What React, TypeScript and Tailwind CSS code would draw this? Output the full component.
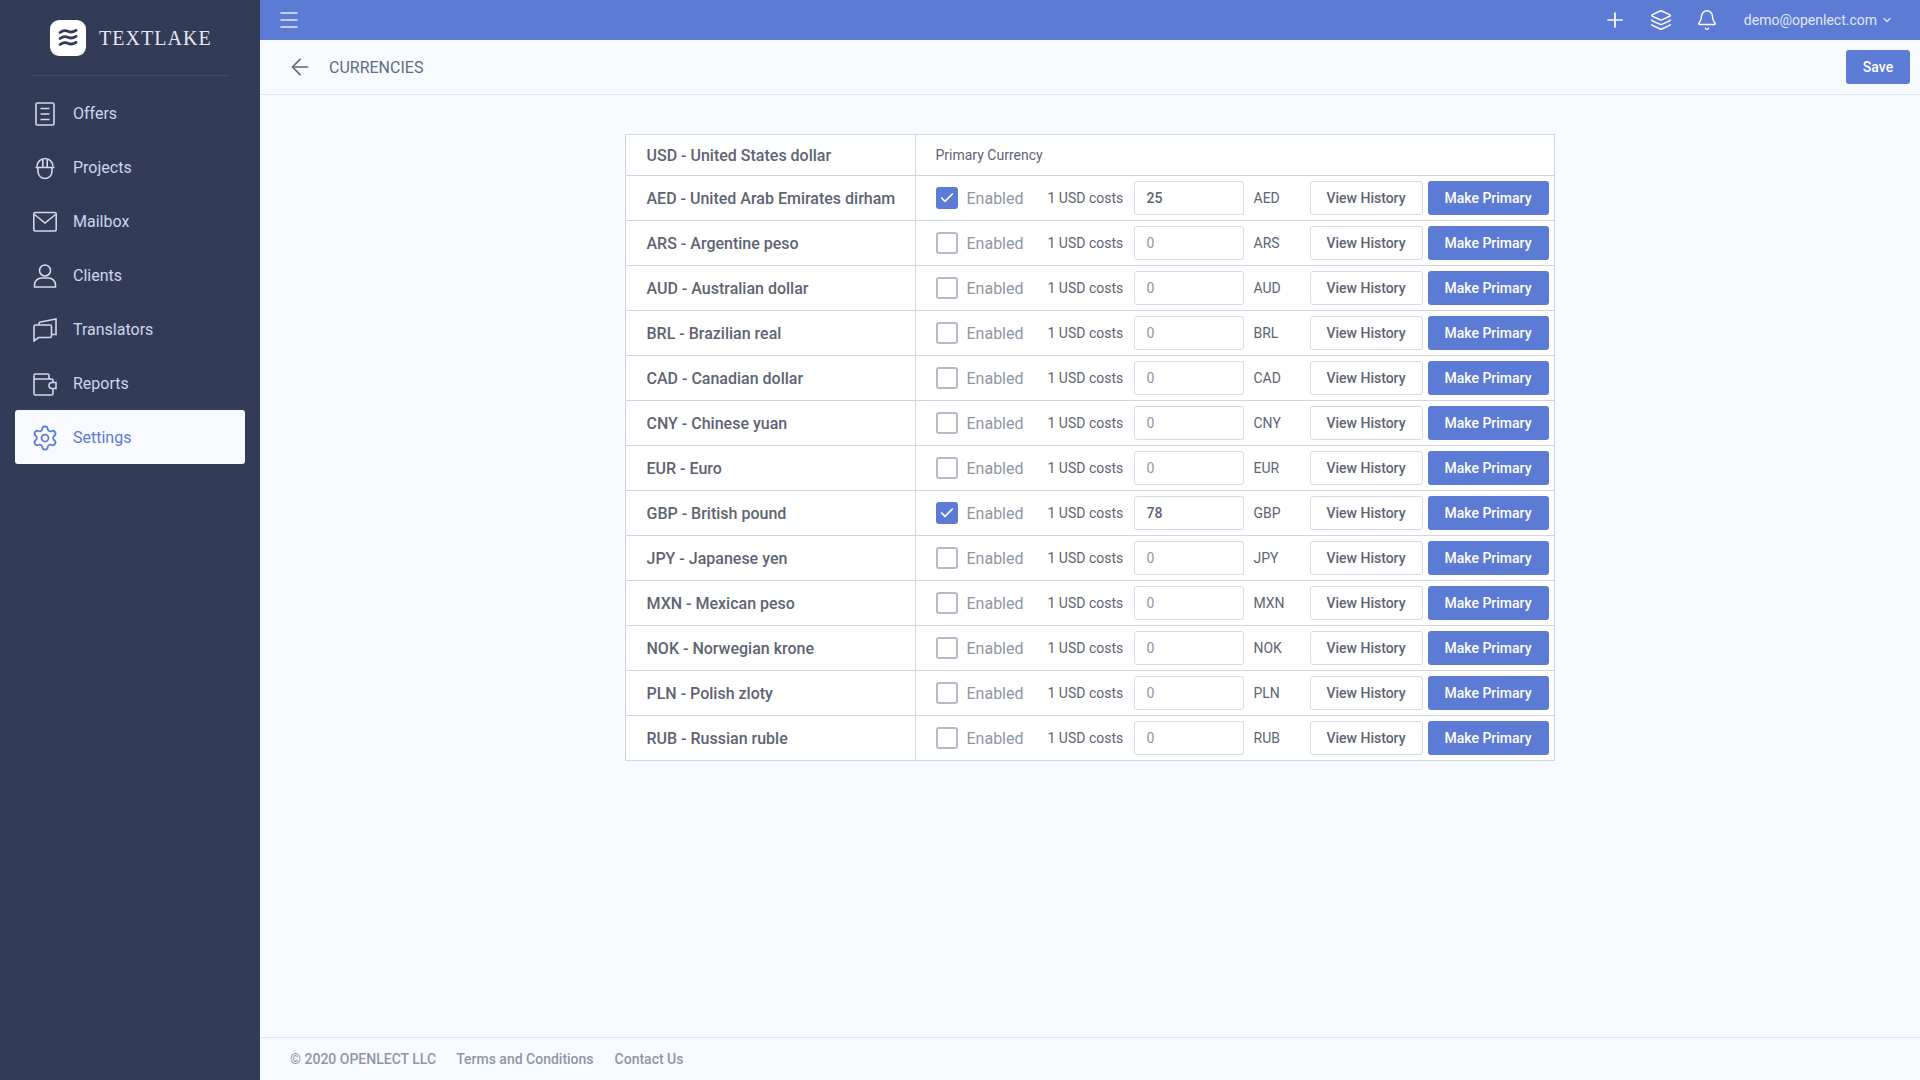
import { Menu, Plus, Layers, Bell, ChevronDown, ArrowLeft, Settings, Check } from 'lucide-react';

const nav = [
  { label: 'Offers', icon: <OffersIcon /> },
  { label: 'Projects', icon: <HelmetIcon /> },
  { label: 'Mailbox', icon: <MailIcon /> },
  { label: 'Clients', icon: <ClientIcon /> },
  { label: 'Translators', icon: <ChatIcon /> },
  { label: 'Reports', icon: <WalletIcon /> },
];

const currencies = [
  { code: 'AED', name: 'United Arab Emirates dirham', value: '25', on: true },
  { code: 'ARS', name: 'Argentine peso', value: '0', on: false },
  { code: 'AUD', name: 'Australian dollar', value: '0', on: false },
  { code: 'BRL', name: 'Brazilian real', value: '0', on: false },
  { code: 'CAD', name: 'Canadian dollar', value: '0', on: false },
  { code: 'CNY', name: 'Chinese yuan', value: '0', on: false },
  { code: 'EUR', name: 'Euro', value: '0', on: false },
  { code: 'GBP', name: 'British pound', value: '78', on: true },
  { code: 'JPY', name: 'Japanese yen', value: '0', on: false },
  { code: 'MXN', name: 'Mexican peso', value: '0', on: false },
  { code: 'NOK', name: 'Norwegian krone', value: '0', on: false },
  { code: 'PLN', name: 'Polish zloty', value: '0', on: false },
  { code: 'RUB', name: 'Russian ruble', value: '0', on: false },
];

function OffersIcon() {
  return (
    <svg width="24" height="24" viewBox="0 0 24 24" fill="none" stroke="currentColor" strokeWidth="1.6">
      <rect x="3" y="1" width="18" height="22" rx="1.5" />
      <path d="M7.500 6.500h9M7.500 12h9M7.500 17.500h9" />
    </svg>
  );
}

function HelmetIcon() {
  return (
    <svg width="24" height="24" viewBox="0 0 24 24" fill="none" stroke="currentColor" strokeWidth="1.6">
      <path d="M4 10.500a8 8 0 0 1 16 0M2.500 11.500h19M9.800 2.500v9M14.200 2.500v9" />
      <path d="M5 12v3.500a7 7 0 0 0 14 0V12" />
    </svg>
  );
}

function MailIcon() {
  return (
    <svg width="24" height="24" viewBox="0 0 24 24" fill="none" stroke="currentColor" strokeWidth="1.6">
      <rect x="0.800" y="2.500" width="22.400" height="18.500" rx="1.500" />
      <path d="M1.500 4.500l10.500 8.500 10.500-8.500" />
    </svg>
  );
}

function ClientIcon() {
  return (
    <svg width="24" height="24" viewBox="0 0 24 24" fill="none" stroke="currentColor" strokeWidth="1.6">
      <circle cx="12" cy="6.500" r="5.500" />
      <path d="M1.500 23v-2.500a7 7 0 0 1 7-6.500h7a7 7 0 0 1 7 6.500V23z" />
    </svg>
  );
}

function ChatIcon() {
  return (
    <svg width="24" height="24" viewBox="0 0 24 24" fill="none" stroke="currentColor" strokeWidth="1.6">
      <path d="M1 8.500a1.500 1.500 0 0 1 1.500-1.500H17a1.500 1.500 0 0 1 1.500 1.500V18a1.500 1.500 0 0 1-1.500 1.500H5.500L1 23z" />
      <path d="M6 7V5.500A1.500 1.500 0 0 1 7.500 4L23 1v15.500H18.500" />
    </svg>
  );
}

function WalletIcon() {
  return (
    <svg width="24" height="24" viewBox="0 0 24 24" fill="none" stroke="currentColor" strokeWidth="1.6">
      <path d="M20 10V8.500A1.500 1.500 0 0 0 18.500 7H1.500M1 3.500v18A1.500 1.500 0 0 0 2.500 23h16a1.500 1.500 0 0 0 1.500-1.500V17" />
      <path d="M1 3.500A1.500 1.500 0 0 1 2.500 2h12A1.500 1.500 0 0 1 16 3.500V7" />
      <path d="M23 10.500h-4a3 3 0 0 0 0 6h4z" />
    </svg>
  );
}

function LogoMark() {
  return (
    <svg width="22" height="20" viewBox="0 0 22 20" fill="none" stroke="#323c56" strokeWidth="2.800" strokeLinecap="round">
      <path d="M3 4.500c3-2.400 5.500-2.400 8-1.200s5 1 8-1" />
      <path d="M3 10.500c3-2.400 5.500-2.400 8-1.200s5 1 8-1" />
      <path d="M3 16.500c3-2.400 5.500-2.400 8-1.200s5 1 8-1" />
    </svg>
  );
}

export default function App() {
  return (
    <div className="flex h-[1080px] w-[1920px] overflow-hidden bg-[#f7fbff] font-['Roboto',sans-serif]">
      {/* Sidebar */}
      <aside className="flex w-[260px] shrink-0 flex-col bg-[#323c56]">
        <div className="mx-8 flex h-[76px] items-center gap-[13px] border-b border-[#434d68] pl-[18px]">
          <div className="flex h-9 w-9 items-center justify-center rounded-[9px] bg-white">
            <LogoMark />
          </div>
          <span className="font-['Liberation_Serif',serif] text-[20px] tracking-[1.05px] text-[#e6e9f0]">TEXTLAKE</span>
        </div>
        <nav className="mt-[11px] flex flex-col px-[15px]">
          {nav.map(item => (
            <div key={item.label} className="flex h-[54px] items-center gap-4 pl-[18px] text-[16px] text-[#cdd6ec]">
              <span className="text-[#d3d9e8]">{item.icon}</span>
              {item.label}
            </div>
          ))}
          <div className="-mt-px flex h-[54px] items-center gap-4 rounded-[3px] bg-[#f8faff] pl-[18px] pt-[2px] text-[16px] text-[#5c7bd5]">
            <Settings size={28} strokeWidth={1.5} className="-mx-[2px]" />
            Settings
          </div>
        </nav>
      </aside>

      <div className="flex min-w-0 flex-1 flex-col">
        {/* Top bar */}
        <header className="flex h-10 shrink-0 items-center justify-between bg-[#5c7bd5] pl-[17px] pr-[27px] text-white">
          <Menu size={24} strokeWidth={1.6} className="text-[#e8edfa]" />
          <div className="flex items-center">
            <Plus size={24} strokeWidth={1.7} />
            <Layers size={22} strokeWidth={1.6} className="ml-[23px]" />
            <Bell size={22} strokeWidth={1.6} className="ml-6" />
            <span className="ml-[26px] text-[14px] text-[#e3e9f9]">demo@openlect.com</span>
            <ChevronDown size={12} strokeWidth={2.5} className="ml-1 text-[#e3e9f9]" />
          </div>
        </header>

        {/* Page title */}
        <div className="flex h-[55px] shrink-0 items-center justify-between border-b border-[#dfe6ee] pl-[28px] pr-[10px]">
          <div className="flex items-center gap-[17px] text-[#5e6779]">
            <ArrowLeft size={26} strokeWidth={1.5} className="-mx-px" />
            <span className="translate-y-px text-[16px] text-[#5e6b82]">CURRENCIES</span>
          </div>
          <button className="h-[34px] w-16 rounded-[3px] bg-[#5c7bd5] text-[14px] font-medium text-white">Save</button>
        </div>

        {/* Table */}
        <main className="flex flex-1 justify-center pr-[1px] pt-[39px]">
          <div className="h-fit w-[930px] border border-[#cdd8e3] bg-white text-[#5e6472]">
            <div className="flex h-[40px] items-center">
              <div className="flex h-full w-[290px] shrink-0 items-center border-r border-[#cdd8e3] pl-[21px] pt-[2px] text-[16px] font-medium">
                USD - United States dollar
              </div>
              <div className="pl-5 text-[14px]">Primary Currency</div>
            </div>
            {currencies.map(c => (
              <div key={c.code} className="flex h-[45px] items-center border-t border-[#cdd8e3]">
                <div className="flex h-full w-[290px] shrink-0 items-center border-r border-[#cdd8e3] pl-[21px] pt-[2px] text-[16px] font-medium">
                  {c.code} - {c.name}
                </div>
                <div className="flex items-center pl-5">
                  {c.on ? (
                    <span className="flex h-[22px] w-[22px] items-center justify-center rounded-[3px] bg-[#5c7bd5] text-white">
                      <Check size={16} strokeWidth={2.5} />
                    </span>
                  ) : (
                    <span className="h-[22px] w-[22px] rounded-[3px] border-2 border-[#b4bbc6]" />
                  )}
                  <span className="ml-[9px] w-[81px] translate-y-px text-[16px] text-[#8f96a3]">Enabled</span>
                  <span className="w-[86px] text-[14px]">1 USD costs</span>
                  <input
                    readOnly
                    value={c.value}
                    className={`h-[34px] w-[110px] rounded-[3px] border border-[#d5dce4] bg-white pl-[12px] text-[14px] outline-none ${c.on ? 'font-medium text-[#5e6472]' : 'text-[#8f96a3]'}`}
                  />
                  <span className="ml-[10px] w-[56px] text-[14px]">{c.code}</span>
                  <button className="h-[34px] w-[113px] rounded-[3px] border border-[#d5dce4] bg-white text-[14px] font-medium text-[#5e6472]">
                    View History
                  </button>
                  <button className="ml-[5px] h-[34px] w-[121px] rounded-[3px] bg-[#5c7bd5] text-[14px] font-medium text-white">
                    Make Primary
                  </button>
                </div>
              </div>
            ))}
          </div>
        </main>

        {/* Footer */}
        <footer className="flex h-[43px] shrink-0 items-center gap-5 border-t border-[#dfe6ee] pl-[30px] text-[14px] font-medium text-[#8f96a3]">
          <span>© 2020 OPENLECT LLC</span>
          <span>Terms and Conditions</span>
          <span className="ml-px">Contact Us</span>
        </footer>
      </div>
    </div>
  );
}
